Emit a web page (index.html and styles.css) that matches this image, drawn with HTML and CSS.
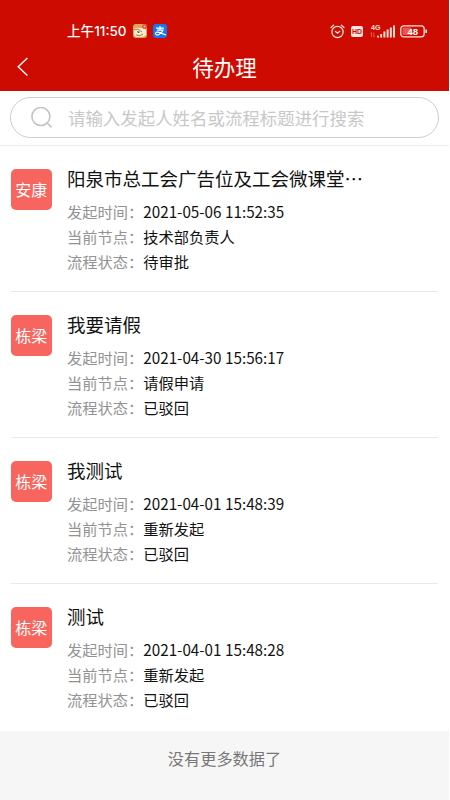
FILE: index.html
```html
<!DOCTYPE html>
<html lang="zh-CN">
<head>
<meta charset="utf-8">
<title>待办理</title>
<link rel="stylesheet" href="styles.css">
</head>
<body>
<div class="screen">
  <header class="header">
    <div class="status">
      <span class="clock">上午<span class="time">11:50</span></span>
      <svg class="app" width="14" height="14" viewBox="0 0 14 14">
        <rect width="14" height="14" rx="3" fill="#dca660"/>
        <path d="M1 5Q4 3 7 4Q11 3 13 6V11Q11 13 8 13H3Q1 12 1 9Z" fill="#f5ecd2"/>
        <path d="M1 6L5 5 9 8M3 11Q7 13 10 10" fill="none" stroke="#a87843"/>
        <path d="M4 7l3 1-2 1z" fill="#302821"/>
        <circle cx="11.5" cy="2.5" r="2.5" fill="#e65530"/><circle cx="11.5" cy="2.5" r="1" fill="#f6c49c"/>
      </svg>
      <svg class="app" width="14" height="14" viewBox="0 0 14 14">
        <rect width="14" height="14" rx="3" fill="#1677f5"/>
        <path d="M3 4H11M7 2V6M4 6H10Q9 9 6 10.5Q3 12 2.5 9.5Q3 7.5 6 8.3L13 11" fill="none" stroke="#fff" stroke-width="1.25"/>
      </svg>
      <div class="signals">
        <svg width="15" height="15" viewBox="0 0 15 15" fill="none" stroke="#ffe5df" stroke-width="1.2" stroke-linecap="round">
          <circle cx="7.5" cy="8" r="5.6"/><path d="M5.3 7.3L7.5 9.2 9.8 7.3M1 3.5L3.6 1.2M11.4 1.2L14 3.5"/>
        </svg>
        <span class="hd">HD</span>
        <svg class="cell" width="26" height="15" viewBox="0 0 26 15">
          <text class="net" x="1" y="5.8">4G</text>
          <path d="M1.5 8.5V13M.5 9.5L1.5 8.5M3.8 8.5V13L4.8 12" fill="none" stroke="#f07468" stroke-width=".7"/>
          <path d="M8 13.5V11.8M11.2 13.5V10M14.4 13.5V7.5M17.6 13.5V5.5M20.8 13.5V3.5M24 13.5V1.5" stroke="#ffe5df" stroke-width="1.9"/>
        </svg>
        <svg class="battery" width="28" height="13" viewBox="0 0 28 13">
          <rect x=".8" y=".8" width="23.4" height="11" rx="3" fill="none" stroke="#ffe5df" stroke-width="1.3"/>
          <rect x="2.5" y="2.5" width="9" height="7.6" rx="1" fill="#e8594d"/>
          <path d="M26.2 4.5V8" stroke="#ffe5df" stroke-width="1.6"/>
          <text class="level" x="12.7" y="9.7">48</text>
        </svg>
      </div>
    </div>
    <div class="nav">
      <svg class="back" width="12" height="20" viewBox="0 0 12 20"><path d="M10.4 1L1.2 9.8 10.4 18.6" fill="none" stroke="#fff" stroke-width="1.4"/></svg>
      <h1>待办理</h1>
    </div>
  </header>

  <div class="search-bar">
    <div class="search">
      <svg width="22" height="22" viewBox="0 0 22 22" fill="none" stroke="#c4c4c4" stroke-width="1.6"><circle cx="9.9" cy="9.5" r="9"/><path d="M16.2 16L20.5 20.4"/></svg>
      <span>请输入发起人姓名或流程标题进行搜索</span>
    </div>
  </div>

  <main class="list">
    <article class="item">
      <div class="avatar">安康</div>
      <div class="body">
        <h2>阳泉市总工会广告位及工会微课堂<span class="dots">⋯</span></h2>
        <p><span>发起时间：</span>2021-05-06 11:52:35</p>
        <p><span>当前节点：</span>技术部负责人</p>
        <p><span>流程状态：</span>待审批</p>
      </div>
    </article>
    <article class="item">
      <div class="avatar">栋梁</div>
      <div class="body">
        <h2>我要请假</h2>
        <p><span>发起时间：</span>2021-04-30 15:56:17</p>
        <p><span>当前节点：</span>请假申请</p>
        <p><span>流程状态：</span>已驳回</p>
      </div>
    </article>
    <article class="item">
      <div class="avatar">栋梁</div>
      <div class="body">
        <h2>我测试</h2>
        <p><span>发起时间：</span>2021-04-01 15:48:39</p>
        <p><span>当前节点：</span>重新发起</p>
        <p><span>流程状态：</span>已驳回</p>
      </div>
    </article>
    <article class="item">
      <div class="avatar">栋梁</div>
      <div class="body">
        <h2>测试</h2>
        <p><span>发起时间：</span>2021-04-01 15:48:28</p>
        <p><span>当前节点：</span>重新发起</p>
        <p><span>流程状态：</span>已驳回</p>
      </div>
    </article>
  </main>
  <footer class="footer">没有更多数据了</footer>
</div>
</body>
</html>
```
FILE: styles.css
```css
* { box-sizing: border-box; }
body {
  margin: 0;
  background: #fff;
  color: #111;
  font-family: "Noto Sans CJK SC", sans-serif;
}
h1, h2, p { margin: 0; font-weight: 400; }
svg { display: block; flex: none; }
.screen {
  display: flex;
  flex-direction: column;
  width: 449px;
  height: 800px;
  overflow: hidden;
}
.header {
  height: 91px;
  padding-top: 20px;
  background: #ce0b00;
  color: #fff;
}
.status {
  display: flex;
  align-items: center;
  height: 22px;
  padding: 0 21px 0 67px;
}
.clock {
  width: 66px;
  font-size: 13.6px;
  font-weight: 500;
  line-height: 21px;
  white-space: nowrap;
}
.time { font-family: Inter, sans-serif; font-size: 13.5px; font-weight: 500; letter-spacing: 0; }
.app { margin-right: 6px; }
.signals { display: flex; align-items: center; margin-left: auto; }
.hd {
  width: 12px;
  height: 11px;
  margin: 0 7px 0 6px;
  border-radius: 2px;
  background: #ffe5df;
  color: #ce0b00;
  font: bold 7px/11px "Liberation Sans", sans-serif;
  text-align: center;
}
.net { fill: #ffe5df; font: bold 7px "Liberation Sans", sans-serif; }
.battery { margin-left: 4px; }
.level { fill: #fff; font: bold 9.5px "Liberation Sans", sans-serif; text-anchor: middle; }
.nav {
  display: grid;
  grid-template-columns: 40px 1fr 40px;
  align-items: center;
  height: 49px;
}
.back { margin-left: 17px; }
h1 { font-size: 21.5px; line-height: 32px; text-align: center; }
.search-bar {
  height: 55px;
  padding: 6px 10px 0;
  border-bottom: 1px solid #ececec;
}
.search {
  display: flex;
  align-items: center;
  gap: 15px;
  height: 41px;
  padding-left: 20px;
  border: 1px solid #ccc;
  border-radius: 21px;
  color: #c8c8c8;
  font-size: 17.45px;
  line-height: 26px;
}
.list { height: 585px; padding: 0 11px; }
.item {
  display: flex;
  gap: 15.5px;
  height: 146px;
  padding-top: 23px;
  border-bottom: 1.5px solid #e9e9e9;
}
.item:last-child { border-bottom: 0; }
.avatar {
  flex: none;
  width: 40.5px;
  height: 40.7px;
  border-radius: 5px;
  background: #f8655e;
  color: #fff;
  font-size: 16px;
  line-height: 40px;
  text-align: center;
}
.body { margin-top: -5px; white-space: nowrap; }
h2 { height: 35px; font-size: 18.5px; line-height: 28px; }
p { font-size: 15.25px; line-height: 25px; }
p span { color: #939393; }
.footer {
  flex: 1;
  background: #f6f6f6;
  color: #777;
  font-size: 16.2px;
  line-height: 55px;
  text-align: center;
}
```
